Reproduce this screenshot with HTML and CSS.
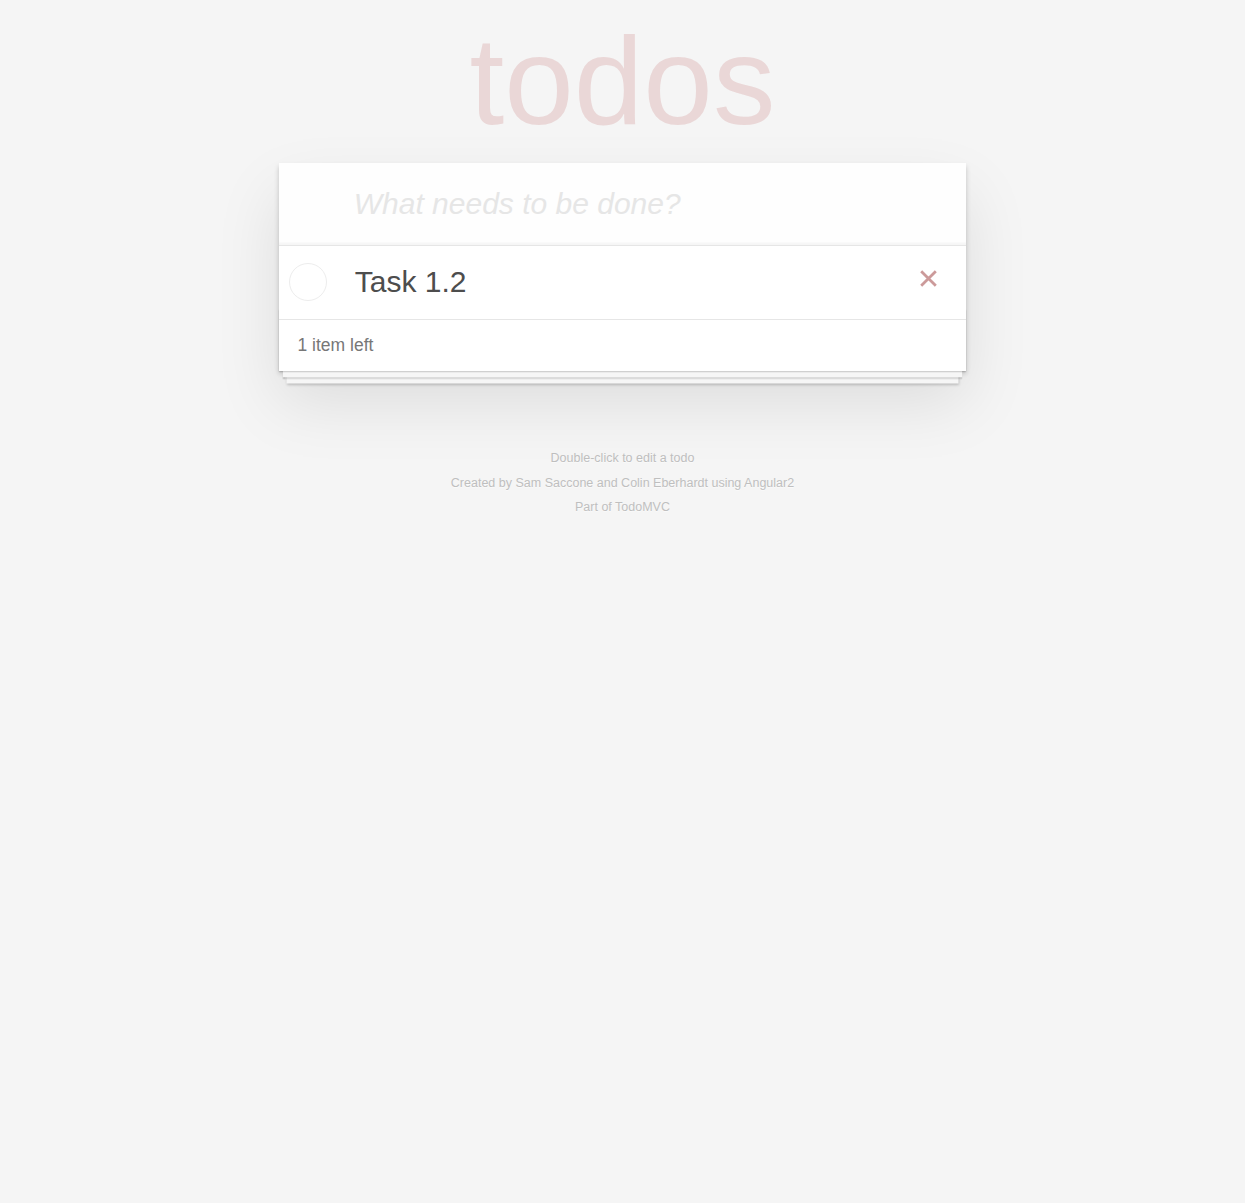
FILE: index.html
```html
<!DOCTYPE html>
<html lang="en">
<head>
<meta charset="utf-8">
<title>Angular2 • TodoMVC</title>
<link rel="stylesheet" href="styles.css">
</head>
<body>
<div class="page">
<section class="todoapp">
  <header class="header">
    <h1 class="title">todos</h1>
    <input class="new-todo" placeholder="What needs to be done?">
  </header>
  <section class="main">
    <ul class="todo-list">
      <li class="todo-item">
        <span class="toggle"></span>
        <label class="todo-label">Task 1.2</label>
        <button class="destroy" aria-label="Delete">
          <svg width="17" height="17" viewBox="0 0 17 17"><path d="M1.2 1.2 L15.8 15.8 M15.8 1.2 L1.2 15.8" stroke="#cc9a9a" stroke-width="2.8" fill="none"/></svg>
        </button>
      </li>
    </ul>
  </section>
  <footer class="footer">
    <span class="todo-count"><strong class="count-num">1</strong> item left</span>
  </footer>
</section>
<footer class="info">
  <p class="info-line">Double-click to edit a todo</p>
  <p class="info-line">Created by <a class="info-link" href="#">Sam Saccone</a> and <a class="info-link" href="#">Colin Eberhardt</a> using <a class="info-link" href="#">Angular2</a></p>
  <p class="info-line">Part of <a class="info-link" href="#">TodoMVC</a></p>
</footer>
</div>
</body>
</html>
```
FILE: styles.css
```css
html, body {
  margin: 0;
  padding: 0;
}
body {
  font: 17.5px "Liberation Sans", Arial, Helvetica, sans-serif;
  line-height: 1.4em;
  background: #f5f5f5;
  color: #4d4d4d;
}
.page {
  max-width: 687.5px;
  margin: 0 auto;
  padding-top: 162.5px;
}
.todoapp {
  background: #fff;
  margin: 0 0 50px 0;
  position: relative;
  box-shadow: 0 2.5px 5px 0 rgba(0, 0, 0, 0.2), 0 31px 62px 0 rgba(0, 0, 0, 0.1);
}
.title {
  position: absolute;
  top: -154px;
  left: 0;
  width: 100%;
  margin: 0;
  font-size: 125px;
  line-height: normal;
  font-weight: 400;
  text-align: center;
  color: rgba(175, 47, 47, 0.15);
}
.new-todo {
  display: block;
  width: 100%;
  box-sizing: border-box;
  margin: 0;
  padding: 20px 20px 20px 75px;
  border: none;
  outline: none;
  background: rgba(0, 0, 0, 0.003);
  box-shadow: inset 0 -2.5px 1px rgba(0, 0, 0, 0.03);
  font-family: inherit;
  font-size: 30px;
  line-height: 42px;
  color: inherit;
}
.new-todo::placeholder {
  font-style: italic;
  color: #e6e6e6;
}
.main {
  border-top: 1px solid #e6e6e6;
}
.todo-list {
  margin: 0;
  padding: 0;
  list-style: none;
}
.todo-item {
  display: flex;
  align-items: center;
  font-size: 30px;
}
.toggle {
  flex: none;
  width: 38px;
  height: 38px;
  box-sizing: border-box;
  margin: 0 0 0 10px;
  border: 1.1px solid #ededed;
  border-radius: 50%;
}
.todo-label {
  flex: 1;
  padding: 18.75px 0 18.75px 28px;
  line-height: 36px;
  color: #4d4d4d;
}
.destroy {
  flex: none;
  width: 50px;
  height: 50px;
  margin: 0 12.5px 7px 0;
  padding: 0;
  border: none;
  background: none;
  display: flex;
  align-items: center;
  justify-content: center;
}
.footer {
  position: relative;
  color: #777;
  padding: 13px 18.75px 13px;
  height: 25px;
  line-height: 24.5px;
  border-top: 1px solid #e6e6e6;
}
.footer::before {
  content: "";
  position: absolute;
  right: 0;
  bottom: 0;
  left: 0;
  height: 62.5px;
  overflow: hidden;
  box-shadow: 0 1.25px 1.25px rgba(0, 0, 0, 0.2),
    0 10px 0 -3.75px #f6f6f6,
    0 11.25px 1.25px -3.75px rgba(0, 0, 0, 0.2),
    0 20px 0 -7.5px #f6f6f6,
    0 21.25px 2.5px -7.5px rgba(0, 0, 0, 0.2);
}
.todo-count {
  float: left;
  text-align: left;
}
.count-num {
  font-weight: 400;
}
.info {
  margin: 81px auto 0;
  color: #bfbfbf;
  font-size: 12.5px;
  text-align: center;
  text-shadow: 0 1px 0 rgba(255, 255, 255, 0.5);
}
.info-line {
  line-height: 1;
  margin: 12px 0;
}
.info-link {
  color: inherit;
  text-decoration: none;
}
```
